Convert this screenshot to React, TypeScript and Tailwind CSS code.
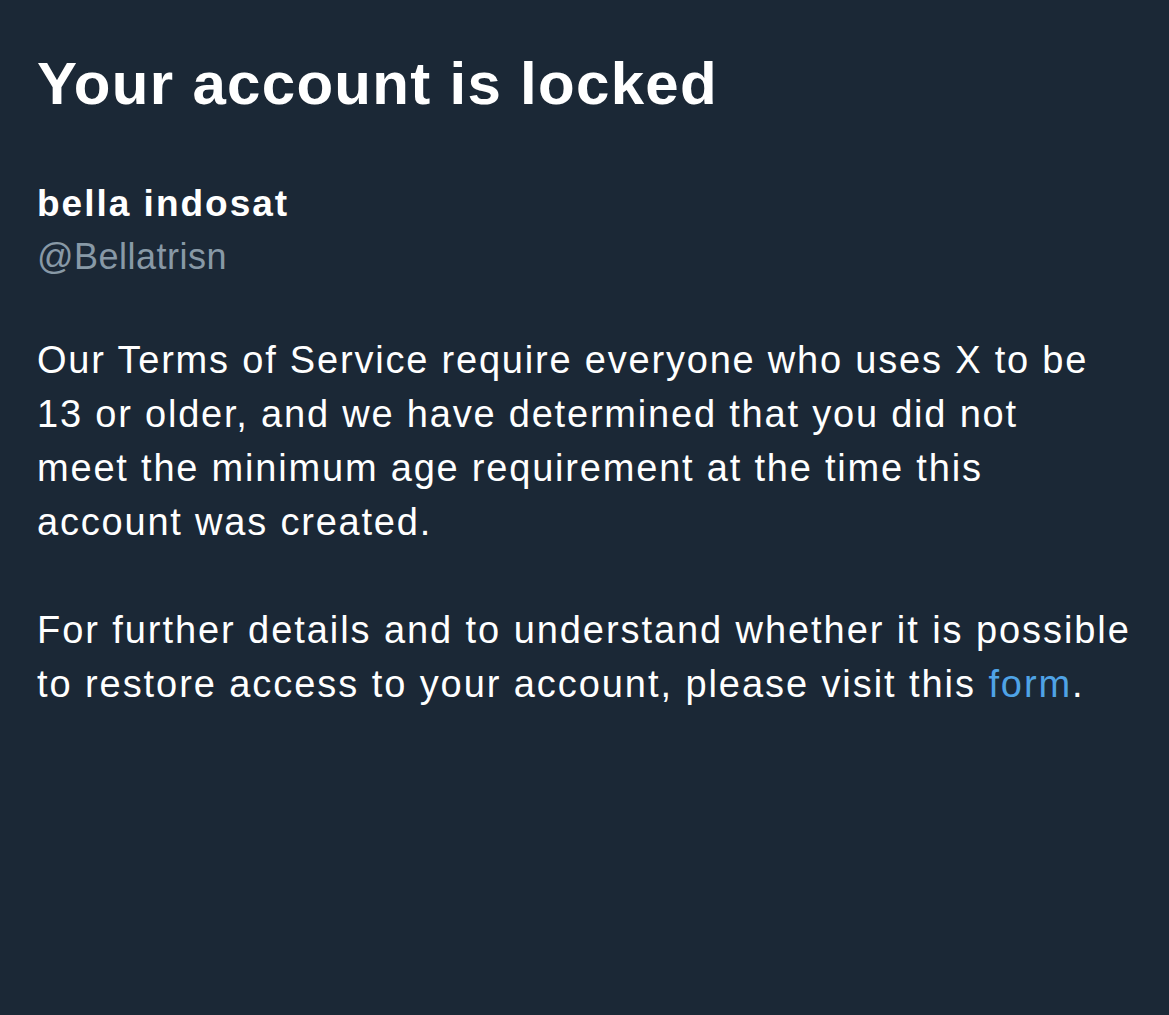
export default function App() {
  return (
    <div
      className="min-h-screen w-full bg-[#1b2836] text-white pl-[37px] pr-4"
      style={{ fontFamily: '"Liberation Sans", Arial, sans-serif' }}
    >
      <div className="pt-[48px]">
        <h1 className="text-[60px] leading-[72px] font-bold tracking-[1.3px]">Your account is locked</h1>
      </div>
      <div className="mt-[57px]">
        <div className="text-[37px] leading-[53px] font-bold tracking-[2px]">bella indosat</div>
        <div className="text-[36px] leading-[53px] text-[#8899a6] tracking-[0.5px]">@Bellatrisn</div>
      </div>
      <p className="mt-[50px] text-[38px] leading-[54px] whitespace-nowrap tracking-[1.8px]">
        Our Terms of Service require everyone who uses X to be
        <br />
        13 or older, and we have determined that you did not
        <br />
        meet the minimum age requirement at the time this
        <br />
        account was created.
      </p>
      <p className="mt-[54px] text-[38px] leading-[54px] whitespace-nowrap tracking-[1.93px]">
        For further details and to understand whether it is possible
        <br />
        to restore access to your account, please visit this{" "}
        <span className="text-[#4fa3e6]">form</span>.
      </p>
    </div>
  );
}
